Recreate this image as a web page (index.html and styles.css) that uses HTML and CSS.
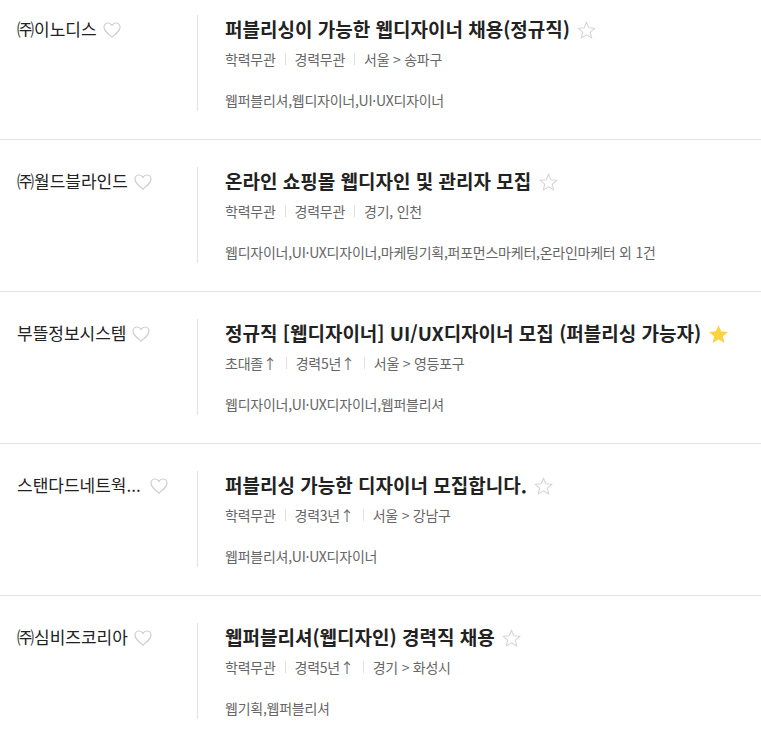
FILE: index.html
```html
<!DOCTYPE html>
<html lang="ko">
<head>
    <meta charset="UTF-8">
    <meta name="viewport" content="width=device-width, initial-scale=1.0">
    <title>채용 공고 목록</title>
    <link rel="stylesheet" href="styles.css">
</head>
<body>

    <div class="list">

        <!-- 공고 1 -->
        <div class="item">
            <div class="corp">
                <span class="corpName">㈜이노디스</span>
                <svg class="heart" viewBox="0 0 18 16"><path d="M9 15 C4 11 1 8.5 1 5.2 C1 2.8 2.8 1 5 1 C6.8 1 8.2 2 9 3.4 C9.8 2 11.2 1 13 1 C15.2 1 17 2.8 17 5.2 C17 8.5 14 11 9 15 Z"/></svg>
            </div>
            <div class="info">
                <h2 class="title">퍼블리싱이 가능한 웹디자이너 채용(정규직)
                    <svg class="star" viewBox="0 0 20 20"><path d="M10 1.5 L12.5 7.2 L18.6 7.7 L14 11.8 L15.4 17.8 L10 14.6 L4.6 17.8 L6 11.8 L1.4 7.7 L7.5 7.2 Z"/></svg>
                </h2>
                <div class="meta">
                    <span>학력무관</span><span class="bar"></span><span>경력무관</span><span class="bar"></span><span>서울 &gt; 송파구</span>
                </div>
                <div class="skills">웹퍼블리셔,웹디자이너,UI·UX디자이너</div>
            </div>
        </div>

        <!-- 공고 2 -->
        <div class="item">
            <div class="corp">
                <span class="corpName">㈜월드블라인드</span>
                <svg class="heart" viewBox="0 0 18 16"><path d="M9 15 C4 11 1 8.5 1 5.2 C1 2.8 2.8 1 5 1 C6.8 1 8.2 2 9 3.4 C9.8 2 11.2 1 13 1 C15.2 1 17 2.8 17 5.2 C17 8.5 14 11 9 15 Z"/></svg>
            </div>
            <div class="info">
                <h2 class="title">온라인 쇼핑몰 웹디자인 및 관리자 모집
                    <svg class="star" viewBox="0 0 20 20"><path d="M10 1.5 L12.5 7.2 L18.6 7.7 L14 11.8 L15.4 17.8 L10 14.6 L4.6 17.8 L6 11.8 L1.4 7.7 L7.5 7.2 Z"/></svg>
                </h2>
                <div class="meta">
                    <span>학력무관</span><span class="bar"></span><span>경력무관</span><span class="bar"></span><span>경기, 인천</span>
                </div>
                <div class="skills">웹디자이너,UI·UX디자이너,마케팅기획,퍼포먼스마케터,온라인마케터 외 1건</div>
            </div>
        </div>

        <!-- 공고 3 -->
        <div class="item">
            <div class="corp">
                <span class="corpName">부뜰정보시스템</span>
                <svg class="heart" viewBox="0 0 18 16"><path d="M9 15 C4 11 1 8.5 1 5.2 C1 2.8 2.8 1 5 1 C6.8 1 8.2 2 9 3.4 C9.8 2 11.2 1 13 1 C15.2 1 17 2.8 17 5.2 C17 8.5 14 11 9 15 Z"/></svg>
            </div>
            <div class="info">
                <h2 class="title">정규직 [웹디자이너] UI/UX디자이너 모집 (퍼블리싱 가능자)
                    <svg class="star on" viewBox="0 0 20 20"><path d="M10 1.5 L12.5 7.2 L18.6 7.7 L14 11.8 L15.4 17.8 L10 14.6 L4.6 17.8 L6 11.8 L1.4 7.7 L7.5 7.2 Z"/></svg>
                </h2>
                <div class="meta">
                    <span>초대졸↑</span><span class="bar"></span><span>경력5년↑</span><span class="bar"></span><span>서울 &gt; 영등포구</span>
                </div>
                <div class="skills">웹디자이너,UI·UX디자이너,웹퍼블리셔</div>
            </div>
        </div>

        <!-- 공고 4 -->
        <div class="item">
            <div class="corp">
                <span class="corpName short">스탠다드네트웍...</span>
                <svg class="heart" viewBox="0 0 18 16"><path d="M9 15 C4 11 1 8.5 1 5.2 C1 2.8 2.8 1 5 1 C6.8 1 8.2 2 9 3.4 C9.8 2 11.2 1 13 1 C15.2 1 17 2.8 17 5.2 C17 8.5 14 11 9 15 Z"/></svg>
            </div>
            <div class="info">
                <h2 class="title">퍼블리싱 가능한 디자이너 모집합니다.
                    <svg class="star" viewBox="0 0 20 20"><path d="M10 1.5 L12.5 7.2 L18.6 7.7 L14 11.8 L15.4 17.8 L10 14.6 L4.6 17.8 L6 11.8 L1.4 7.7 L7.5 7.2 Z"/></svg>
                </h2>
                <div class="meta">
                    <span>학력무관</span><span class="bar"></span><span>경력3년↑</span><span class="bar"></span><span>서울 &gt; 강남구</span>
                </div>
                <div class="skills">웹퍼블리셔,UI·UX디자이너</div>
            </div>
        </div>

        <!-- 공고 5 -->
        <div class="item">
            <div class="corp">
                <span class="corpName">㈜심비즈코리아</span>
                <svg class="heart" viewBox="0 0 18 16"><path d="M9 15 C4 11 1 8.5 1 5.2 C1 2.8 2.8 1 5 1 C6.8 1 8.2 2 9 3.4 C9.8 2 11.2 1 13 1 C15.2 1 17 2.8 17 5.2 C17 8.5 14 11 9 15 Z"/></svg>
            </div>
            <div class="info">
                <h2 class="title">웹퍼블리셔(웹디자인) 경력직 채용
                    <svg class="star" viewBox="0 0 20 20"><path d="M10 1.5 L12.5 7.2 L18.6 7.7 L14 11.8 L15.4 17.8 L10 14.6 L4.6 17.8 L6 11.8 L1.4 7.7 L7.5 7.2 Z"/></svg>
                </h2>
                <div class="meta">
                    <span>학력무관</span><span class="bar"></span><span>경력5년↑</span><span class="bar"></span><span>경기 &gt; 화성시</span>
                </div>
                <div class="skills">웹기획,웹퍼블리셔</div>
            </div>
        </div>

    </div>

</body>
</html>
```

FILE: styles.css
```css
* {
    margin: 0;
    padding: 0;
    box-sizing: border-box;
}

body {
    font-family: "Noto Sans CJK KR", "Noto Sans", sans-serif;
    background-color: #fff;
    color: #222;
    overflow: hidden;
}

/* 첫 번째 공고는 위쪽이 살짝 잘려 있음 */
.list {
    margin-top: -12px;
}

.item {
    display: flex;
    padding: 27px 0 28px;
    border-bottom: 1px solid #e4e4e4;
}

.corp {
    width: 197px;
    padding-left: 17px;
    display: flex;
    align-items: flex-start;
    gap: 6px;
    font-size: 17px;
    line-height: 28px;
    color: #222;
}

.corpName {
    white-space: nowrap;
}

/* 말줄임된 회사명은 폭 고정 */
.corpName.short {
    width: 127px;
}

.heart {
    width: 18px;
    height: 16px;
    margin-top: 7px;
    flex-shrink: 0;
    fill: none;
    stroke: #cfcfcf;
    stroke-width: 1.2;
}

.info {
    flex: 1;
    border-left: 1px solid #e4e4e4;
    padding-left: 27px;
    padding-bottom: 1px;
}

.title {
    font-size: 19px;
    font-weight: bold;
    line-height: 28px;
    color: #222;
    white-space: nowrap;
}

.star {
    width: 19px;
    height: 19px;
    margin-left: 2px;
    vertical-align: -3px;
    fill: none;
    stroke: #d4d4d4;
    stroke-width: 1.1;
}

.star.on {
    fill: #fbd33f;
    stroke: #fbd33f;
}

.meta {
    margin-top: 6px;
    display: flex;
    align-items: center;
    font-size: 14px;
    line-height: 20px;
    color: #666;
    letter-spacing: -0.25px;
}

.bar {
    width: 1px;
    height: 12px;
    margin: 0 9px;
    background-color: #e0e0e0;
}

.skills {
    margin-top: 21px;
    font-size: 14px;
    line-height: 20px;
    color: #666;
    letter-spacing: -0.25px;
}
```
